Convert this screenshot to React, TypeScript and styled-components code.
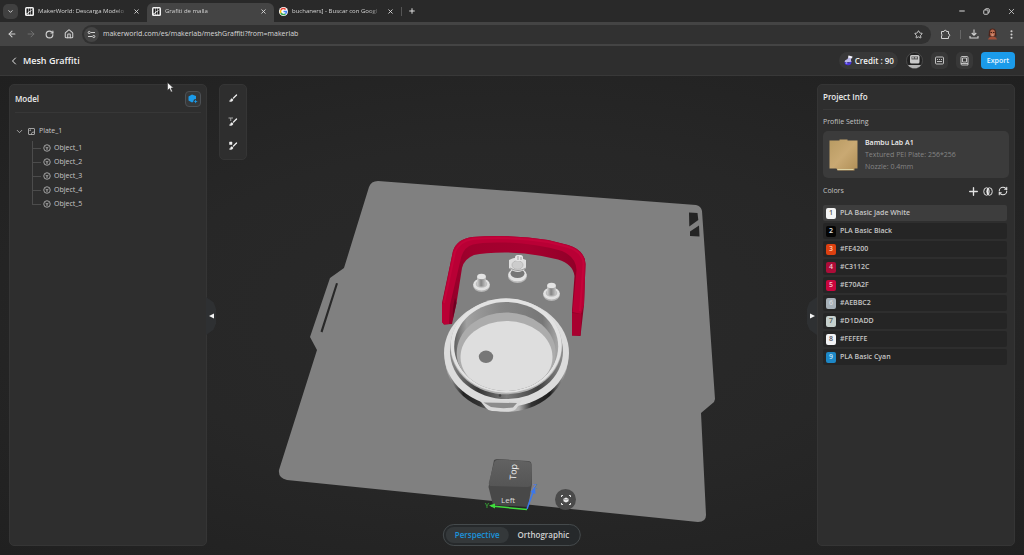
import React from "react";
import styled, { createGlobalStyle, css } from "styled-components";
import {
  ArrowLeft,
  ArrowRight,
  RotateCw,
  House,
  Star,
  EllipsisVertical,
  ChevronDown,
  ChevronLeft,
  X,
  Plus,
  Minus,
  RefreshCw,
} from "lucide-react";

const GlobalStyle = createGlobalStyle`
  * { box-sizing: border-box; }
  body {
    margin: 0;
    background: #222222;
    color: #e6e6e6;
    font-family: "Open Sans", "Noto Sans", sans-serif;
    font-size: 7px;
    line-height: 10px;
  }
  button, input { font: inherit; color: inherit; }
  button { padding: 0; border: 0; background: none; cursor: pointer; }
  ul { list-style: none; margin: 0; padding: 0; }
  h1, h2, h3, p { margin: 0; }
  svg { display: block; flex: none; }
`;

const Page = styled.div`
  display: flex;
  flex-direction: column;
  min-height: 100vh;
`;

/* Browser frame */

const TabStrip = styled.div`
  display: flex;
  align-items: center;
  height: 22px;
  padding-left: 3px;
  background: #292929;
  color: #dcdcdc;
`;

const TabSearch = styled.button`
  display: grid;
  place-items: center;
  width: 15px;
  height: 15px;
  margin-right: 2px;
  border-radius: 5px;
  background: #404040;
`;

const Tab = styled.div<{ $active?: boolean }>`
  display: flex;
  align-items: center;
  gap: 4px;
  width: 127px;
  height: 19px;
  margin-top: 3px;
  padding: 0 7px 3px 5px;
  border-radius: 6px 6px 0 0;
  background: ${(p) => (p.$active ? "#444444" : "transparent")};
`;

const TabTitle = styled.span`
  flex: 1;
  white-space: nowrap;
  font-size: 6px;
  color: #d4d4d4;
  mask-image: linear-gradient(to right, #000 85%, transparent);
`;

const TabDivider = styled.span`
  width: 1px;
  height: 9px;
  background: #555555;
`;

const PlainButton = styled.button`
  display: grid;
  place-items: center;
  width: 19px;
  height: 19px;
`;

const TabClose = styled.button`
  display: grid;
  place-items: center;
  width: 8px;
  height: 10px;
`;

const WindowControls = styled.div`
  display: flex;
  gap: 6px;
  margin-left: auto;
  padding-right: 3px;
`;

const Toolbar = styled.div`
  display: flex;
  align-items: center;
  height: 24px;
  padding: 0 3px 0 2px;
  background: #444444;
  color: #d2d2d2;
`;

const AddressBar = styled.div`
  display: flex;
  flex: 1;
  align-items: center;
  height: 19px;
  margin: 0 5px 0 4px;
  padding: 0 3px 0 2px;
  border-radius: 10px;
  background: #313131;
`;

const SiteInfo = styled.button`
  display: grid;
  place-items: center;
  width: 15px;
  height: 15px;
  margin-right: 4px;
  border-radius: 8px;
  background: #444444;
`;

const AddressInput = styled.input`
  flex: 1;
  min-width: 0;
  padding: 0;
  border: 0;
  outline: 0;
  background: none;
  color: #dadada;
`;

const ToolbarDivider = styled.span`
  width: 1px;
  height: 9px;
  margin: 0 3px 0 5px;
  background: #666666;
`;

/* Application header */

const Header = styled.header`
  display: flex;
  align-items: center;
  height: 30px;
  padding: 0 9px 0 8px;
  border-bottom: 1px solid #383838;
  background: #2e2e2e;
`;

const BackButton = styled.button`
  display: grid;
  place-items: center;
  width: 10px;
  height: 16px;
  margin-right: 5px;
`;

const Title = styled.h1`
  font-size: 9px;
  font-weight: 600;
  line-height: 12px;
  color: #f2f2f2;
`;

const HeaderActions = styled.div`
  display: flex;
  align-items: center;
  gap: 8px;
  margin-left: auto;
`;

const Credit = styled.div`
  display: flex;
  align-items: center;
  gap: 2px;
  height: 17px;
  padding: 0 4px 0 5px;
  border-radius: 9px;
  background: #383838;
  color: #f4f4f4;
  font-size: 8px;
  font-weight: 600;
`;

const HeaderButton = styled.button<{ $round?: boolean }>`
  display: grid;
  place-items: center;
  width: 17px;
  height: 17px;
  border-radius: ${(p) => (p.$round ? "9px" : "5px")};
  background: #383838;
  color: #d0d0d0;
`;

const ExportButton = styled.button`
  height: 17px;
  padding: 0 6px;
  border-radius: 4px;
  background: #1b9bea;
  color: #eaf6ff;
  font-weight: 600;
`;

/* Workspace */

const Workspace = styled.main`
  position: relative;
  display: flex;
  flex: 1;
  gap: 12px;
  padding: 8px 9px 9px;
  background: radial-gradient(ellipse at center, #2a2a2a 0%, #272727 50%, #202020 100%);
`;

const Scene = styled.svg`
  position: absolute;
  inset: 0;
  width: 100%;
  height: 100%;
`;

const Panel = styled.section`
  position: relative;
  width: 198px;
  border: 1px solid #353535;
  border-radius: 5px;
  background: #2e2e2e;
`;

const ProjectPanel = styled(Panel)`
  margin-left: auto;
`;

const PanelHeader = styled.div<{ $tall?: boolean }>`
  display: flex;
  align-items: center;
  justify-content: space-between;
  height: ${(p) => (p.$tall ? "28px" : "25px")};
  margin: 0 5px;
  border-bottom: 1px solid #373737;
`;

const PanelTitle = styled.h2`
  font-size: 8px;
  font-weight: 600;
  line-height: 12px;
  color: #ececec;
`;

const CubeToggle = styled.button`
  display: grid;
  place-items: center;
  width: 16px;
  height: 16px;
  border: 1px solid #4c5054;
  border-radius: 4px;
  background: #363839;
`;

const CollapseHandle = styled.button<{ $side: "left" | "right" }>`
  position: absolute;
  top: 212px;
  display: grid;
  place-items: center;
  width: 10px;
  height: 38px;
  background: #2e3032;
  ${(p) =>
    p.$side === "right"
      ? css`
          right: -10px;
          clip-path: polygon(0 0, 75% 14%, 100% 30%, 100% 70%, 75% 86%, 0 100%);
        `
      : css`
          left: -11px;
          clip-path: polygon(100% 0, 25% 14%, 0 30%, 0 70%, 25% 86%, 100% 100%);
        `}
`;

const Tree = styled.ul`
  padding: 10px 5px;
  color: #c8c8c8;
`;

const TreeParent = styled.button`
  display: flex;
  align-items: center;
  gap: 4px;
  height: 16px;
`;

const Branch = styled.ul`
  margin: 2px 0 0 17px;
`;

const Leaf = styled.li`
  position: relative;
  display: flex;
  height: 14px;
  padding-left: 11px;
  &::before {
    content: "";
    position: absolute;
    top: 0;
    left: 0;
    width: 8px;
    height: 7px;
    border-left: 1px solid #4c4c4c;
    border-bottom: 1px solid #4c4c4c;
  }
  &:not(:last-child)::after {
    content: "";
    position: absolute;
    top: 7px;
    bottom: 0;
    left: 0;
    border-left: 1px solid #4c4c4c;
  }
`;

const LeafButton = styled.button`
  display: flex;
  align-items: center;
  gap: 3px;
`;

const ToolPanel = styled.div`
  position: relative;
  display: flex;
  flex-direction: column;
  align-items: center;
  align-self: flex-start;
  gap: 8px;
  width: 28px;
  padding: 5px 0 5px;
  border: 1px solid #353535;
  border-radius: 5px;
  background: #2e2e2e;
`;

const ToolButton = styled.button`
  display: grid;
  place-items: center;
  width: 16px;
  height: 16px;
`;

const ViewSwitch = styled.div`
  position: absolute;
  bottom: 9px;
  left: 50%;
  display: flex;
  height: 22px;
  padding: 2px;
  border: 1px solid #454a4c;
  border-radius: 11px;
  background: #26292b;
  transform: translateX(-50%);
`;

const ViewOption = styled.button<{ $active?: boolean }>`
  padding: 0 9px;
  border-radius: 8px;
  background: ${(p) => (p.$active ? "#34383a" : "transparent")};
  color: ${(p) => (p.$active ? "#1b93dc" : "#d2d2d2")};
  font-size: 8px;
  font-weight: 600;
`;

const FocusButton = styled.button`
  position: absolute;
  bottom: 45px;
  left: calc(50% + 43px);
  display: grid;
  place-items: center;
  width: 21px;
  height: 21px;
  border-radius: 11px;
  background: #4a4a4a;
`;

const PanelBody = styled.div`
  padding: 7px 5px;
`;

const SectionLabel = styled.h3`
  font-size: 7px;
  font-weight: 400;
  color: #c4c4c4;
`;

const ProfileCard = styled.div`
  display: flex;
  align-items: center;
  gap: 6px;
  height: 47px;
  margin-top: 4px;
  padding-left: 5px;
  border-radius: 5px;
  background: #3b3b3b;
`;

const ProfileName = styled.p`
  font-weight: 600;
  line-height: 12px;
  color: #f0f0f0;
`;

const ProfileDetail = styled.p`
  line-height: 12px;
  color: #858585;
`;

const ColorsHeader = styled.div`
  display: flex;
  align-items: center;
  justify-content: space-between;
  margin-top: 5px;
  height: 16px;
`;

const ColorActions = styled.div`
  display: flex;
  gap: 3px;
`;

const SmallButton = styled.button`
  display: grid;
  place-items: center;
  width: 12px;
  height: 12px;
  color: #e4e4e4;
`;

const ColorList = styled.ul`
  display: flex;
  flex-direction: column;
  gap: 2px;
  margin: 6px 2px 0 0;
`;

const ColorRow = styled.button<{ $selected?: boolean }>`
  display: flex;
  align-items: center;
  gap: 4px;
  width: 100%;
  height: 16px;
  padding-left: 3px;
  border-radius: 2px;
  background: ${(p) => (p.$selected ? "#3d3d3d" : "#252525")};
  color: #c6c6c6;
  font-weight: 600;
`;

const Swatch = styled.span<{ $color: string; $ink: string }>`
  display: grid;
  place-items: center;
  width: 10px;
  height: 11px;
  border-radius: 2px;
  background: ${(p) => p.$color};
  color: ${(p) => p.$ink};
`;

const Pointer = styled.svg`
  position: absolute;
  top: 6px;
  left: 167px;
`;

const objects = ["Object_1", "Object_2", "Object_3", "Object_4", "Object_5"];

const colors = [
  { name: "PLA Basic Jade White", color: "#f4f4f4", ink: "#555555" },
  { name: "PLA Basic Black", color: "#050505", ink: "#e8e8e8" },
  { name: "#FE4200", color: "#dd4010", ink: "#ffc4a8" },
  { name: "#C3112C", color: "#ad0c38", ink: "#f3c4d0" },
  { name: "#E70A2F", color: "#c9053d", ink: "#f8c4d2" },
  { name: "#AEBBC2", color: "#a7b0b7", ink: "#d5dade" },
  { name: "#D1DADD", color: "#c6d0cd", ink: "#505856" },
  { name: "#FEFEFE", color: "#f2f2f4", ink: "#50505c" },
  { name: "PLA Basic Cyan", color: "#1d87c6", ink: "#bfe4fa" },
];

const MakerFavicon = () => (
  <svg width="9" height="9" viewBox="0 0 18 18" aria-hidden="true">
    <rect width="18" height="18" rx="3" fill="#f2f2f2" />
    <path d="M3 3h3v8l-3 2zM7 3h4v4l-4 3zM12 3h3v2l-3 2zM3 15l4-3v3zM8 11l3-2v6H8zM12 8l3-2v9h-3z" fill="#1d1d1d" />
  </svg>
);

const GoogleFavicon = () => (
  <svg width="9" height="9" viewBox="0 0 18 18" aria-hidden="true">
    <circle cx="9" cy="9" r="9" fill="#fff" />
    <g fill="none" strokeWidth="3">
      <path d="M13.2 5A6 6 0 0 0 3.8 6" stroke="#ea4335" />
      <path d="M3.8 6a6 6 0 0 0 0 6" stroke="#fbbc05" />
      <path d="M3.8 12a6 6 0 0 0 9 1.6" stroke="#34a853" />
      <path d="M12.8 13.6A6 6 0 0 0 15 9H9" stroke="#4285f4" />
    </g>
  </svg>
);

const TuneIcon = () => (
  <svg width="9" height="9" viewBox="0 0 18 18" fill="none" stroke="currentColor" strokeWidth="2">
    <path d="M8 5h8M2 13h8" />
    <circle cx="4.500" cy="5" r="2.200" />
    <circle cx="13.500" cy="13" r="2.200" />
  </svg>
);

const PuzzleIcon = () => (
  <svg width="11" height="11" viewBox="0 0 22 22" fill="none" stroke="currentColor" strokeWidth="2" strokeLinejoin="round">
    <path d="M3 5h5a2.500 2.500 0 0 1 5 0h4v5a2.500 2.500 0 0 1 0 5v4H3v-5a2.500 2.500 0 0 0 0-4z" />
  </svg>
);

const DownloadIcon = () => (
  <svg width="10" height="10" viewBox="0 0 20 20" fill="none" stroke="currentColor" strokeWidth="2.200">
    <path d="M10 1v11M5.500 8l4.500 4.500L14.500 8M2 14v4h16v-4" />
  </svg>
);

const RestoreIcon = () => (
  <svg width="7" height="7" viewBox="0 0 14 14" fill="none" stroke="currentColor" strokeWidth="1.8">
    <rect x="1.5" y="4" width="8.5" height="8.5" rx="1.5" />
    <path d="M4.5 4V3a1.500 1.500 0 0 1 1.500-1.500H11A1.500 1.500 0 0 1 12.500 3v5A1.500 1.500 0 0 1 11 9.500h-1" />
  </svg>
);

const Avatar = () => (
  <svg width="11" height="12" viewBox="0 0 22 24">
    <path d="M4 7q1-6 7-6t7 6l1 10H3z" fill="#4c241b" />
    <ellipse cx="11" cy="10" rx="5" ry="7" fill="#b9694d" />
    <path d="M2 23q2-6 9-6t9 6z" fill="#a34f38" />
    <path d="M7 9h3M12 9h3" stroke="#3d1c14" strokeWidth="2" />
    <path d="M9 14h4" stroke="#f0d2c2" strokeWidth="1.500" />
  </svg>
);

const FlaskIcon = () => (
  <svg width="9" height="12" viewBox="0 0 18 24">
    <path d="M9 4l5 1v6a7 7 0 0 1 1 3H1q0-4 6-6z" fill="#b9b6e6" />
    <path d="M1 14q7 3 14-1a7 7 0 1 1-14 1z" fill="#4b35dc" />
    <path d="M9 1l8 2-1 4-8-2z" fill="#f5f5ff" />
    <circle cx="5" cy="16" r="2" fill="#8e86ff" />
  </svg>
);

const RobotIcon = () => (
  <svg width="17" height="17" viewBox="0 0 34 34">
    <circle cx="17" cy="17" r="16" fill="#222" stroke="#525252" strokeWidth="1.500" />
    <path d="M4 26h26a16 16 0 0 1-26 0z" fill="#b4b4b4" />
    <rect x="8" y="6" width="19" height="17" rx="3" fill="#c9c9c9" />
    <path d="M11 9h13v6H11z" fill="#5a5a5a" />
    <path d="M14 10v3M20 10v3" stroke="#eee" strokeWidth="2" />
  </svg>
);

const KeyboardIcon = () => (
  <svg width="9" height="9" viewBox="0 0 18 18" fill="none" stroke="currentColor" strokeWidth="1.800">
    <rect x="1" y="2" width="16" height="14" rx="2" />
    <path d="M4 7h2M8 7h2M12 7h2M4 11h10" />
  </svg>
);

const ManualIcon = () => (
  <svg width="9" height="10" viewBox="0 0 18 20" fill="none" stroke="currentColor" strokeWidth="1.800">
    <path d="M4 1h10a2 2 0 0 1 2 2v15H4a2 2 0 0 1-2-2V3a2 2 0 0 1 2-2z" />
    <path d="M5 4h8v8H5zM2 15h14" />
  </svg>
);

const ModelCubeIcon = () => (
  <svg width="10" height="10" viewBox="0 0 20 20">
    <path d="M8 1l8 3v6l-4 1-2 5-2 1-7-4V5z" fill="#1b9bea" />
    <path d="M15 11l1.500 3 3 1-3 1-1.500 3-1-3-3-1 3-1z" fill="#1b9bea" />
  </svg>
);

const PlateIcon = () => (
  <svg width="7" height="7" viewBox="0 0 14 14" fill="none" stroke="currentColor" strokeWidth="1.500">
    <rect x="1" y="1" width="12" height="12" rx="1" />
    <path d="M4 6V4h2M7 13v-2q0-3 6-3" />
  </svg>
);

const ObjectIcon = () => (
  <svg width="8" height="8" viewBox="0 0 16 16" fill="none" stroke="currentColor" strokeWidth="1.500">
    <circle cx="8" cy="8" r="6.500" />
    <path d="M8 8V12M8 8L5 6M8 8l3-2" />
  </svg>
);

const Brush = ({ kind }: { kind: "plain" | "text" | "dots" }) => (
  <svg width="10" height="10" viewBox="0 0 20 20" fill="none" stroke="#efefef">
    <path d="M17 4l-6 6" strokeWidth="2.600" strokeLinecap="round" />
    <path d="M8 11q-3 0-3 3 0 2-3 2 5 3 8-1 1-2-2-4z" fill="#efefef" strokeWidth="0.500" />
    {kind === "text" && <path d="M1 2h9M5.500 2v6" stroke="#a4a4a4" strokeWidth="2" />}
    {kind === "dots" && <path d="M3 2h5v5H3z" fill="#efefef" />}
  </svg>
);

const ContrastIcon = () => (
  <svg width="10" height="9" viewBox="0 0 20 18">
    <ellipse cx="7" cy="9" rx="5.500" ry="7.500" fill="none" stroke="#ddd" strokeWidth="2" />
    <ellipse cx="13" cy="9" rx="5.500" ry="7.500" fill="none" stroke="#ddd" strokeWidth="2" />
    <path d="M10 3v12q-3-6 0-12z" fill="#eee" stroke="#eee" strokeWidth="2" />
  </svg>
);

const PlateThumb = () => (
  <svg width="31" height="32" viewBox="0 0 30 32" role="img" aria-label="Textured plate">
    <defs>
      <linearGradient id="gold" x1="0" y1="0" x2="1" y2="1">
        <stop offset="0" stopColor="#b89a62" />
        <stop offset="0.500" stopColor="#c9a973" />
        <stop offset="1" stopColor="#b08f57" />
      </linearGradient>
    </defs>
    <path d="M1 1.500h10v-1h8v1h10v28h-3v2H9l-1-2H1z" fill="url(#gold)" />
    <path d="M9 30.500h16" stroke="#dcd2a4" />
  </svg>
);

const FocusIcon = () => (
  <svg width="12" height="12" viewBox="0 0 24 24" fill="none" stroke="#e8e8e8" strokeWidth="2">
    <path d="M3 6V3h3M18 3h3v3M21 18v3h-3M6 21H3v-3" />
    <path d="M12 7l5 2.500v5L12 17l-5-2.500v-5z" fill="#eee" stroke="none" />
    <path d="M8 10l4 2 4-2" stroke="#555" strokeWidth="1" />
  </svg>
);

const Arrow = ({ flip }: { flip?: boolean }) => (
  <svg width="5" height="6" viewBox="0 0 5 6">
    <path d={flip ? "M0 0.500L5 3 0 5.500z" : "M5 0.500L0 3l5 2.500z"} fill="#f4f4f4" />
  </svg>
);

const Peg = ({ x, y }: { x: number; y: number }) => (
  <g transform={`translate(${x} ${y})`}>
    <ellipse cx="0" cy="3" rx="8.300" ry="6" fill="#b5b5b5" />
    <ellipse cx="0" cy="1.500" rx="8.300" ry="6" fill="#e2e2e2" />
    <ellipse cx="0" cy="1" rx="5.800" ry="3.800" fill="#bdbdbd" />
    <path d="M-4.300-6.500V1a4.300 2.600 0 0 0 8.600 0V-6.500z" fill="url(#pin)" />
    <ellipse cx="0" cy="-6.500" rx="4.300" ry="2.800" fill="#e4e4e4" />
  </g>
);

const ModelScene = () => (
  <Scene viewBox="0 76 1024 479" role="img" aria-label="Model on build plate">
    <defs>
      <linearGradient id="pin">
        <stop offset="0" stopColor="#d0d0d0" />
        <stop offset="0.450" stopColor="#858585" />
        <stop offset="1" stopColor="#c4c4c4" />
      </linearGradient>
      <linearGradient id="wall">
        <stop offset="0" stopColor="#606060" />
        <stop offset="0.120" stopColor="#a0a0a0" />
        <stop offset="0.450" stopColor="#858585" />
        <stop offset="0.850" stopColor="#777777" />
        <stop offset="1" stopColor="#a8a8a8" />
      </linearGradient>
      <linearGradient id="skirt">
        <stop offset="0" stopColor="#c0c0c0" />
        <stop offset="0.150" stopColor="#222222" />
        <stop offset="0.280" stopColor="#333333" />
        <stop offset="0.450" stopColor="#c0c0c0" />
        <stop offset="0.600" stopColor="#b0b0b0" />
        <stop offset="0.700" stopColor="#333333" />
        <stop offset="0.850" stopColor="#1c1c1c" />
        <stop offset="1" stopColor="#bbbbbb" />
      </linearGradient>
      <linearGradient id="gap" x1="0" y1="0" x2="1" y2="0">
        <stop offset="0" stopColor="#8c8c8c" />
        <stop offset="0.250" stopColor="#363636" />
        <stop offset="0.500" stopColor="#7c7c7c" />
        <stop offset="0.780" stopColor="#404040" />
        <stop offset="1" stopColor="#8c8c8c" />
      </linearGradient>
      <linearGradient id="redInside">
        <stop offset="0" stopColor="#8f0029" />
        <stop offset="0.200" stopColor="#a0002d" />
        <stop offset="0.600" stopColor="#a6002f" />
        <stop offset="1" stopColor="#8c0027" />
      </linearGradient>
      <linearGradient id="cubeTop" x1="0" y1="0" x2="0" y2="1">
        <stop offset="0" stopColor="#626262" />
        <stop offset="1" stopColor="#555555" />
      </linearGradient>
    </defs>

    <path
      fillRule="evenodd"
      fill="#808080"
      d="M378 181L696 205Q701 206 702 211L715 399 714 402 701 413 706 515Q706 522 698 522L287 480Q278 478 279 470L317 350 310 337 330 278 344 268 369 187Q371 181 378 181zM336 283l2 0.500L322.500 332.500 320.500 331.500z"
    />
    <path d="M689 212.500l8.500 0.500 0.800 7-9 6.500zM699 225.500l0.500 11-9.500-0.500 0-4.500z" fill="#242424" />

    <path
      d="M442 322V303L453 251Q457 239 472 237 512 234 548 240L568 245Q585 250 585.500 264L584 305 580.500 336 572 335.500 572 310 574.500 276Q573 264 558 259.500 530 252.500 505 252.500 484 252.500 474 255 464 259 462 268L456.500 303 452 324 444 324.500z"
      fill="url(#redInside)"
    />
    <path
      d="M442 305L453 251Q457 239 472 237 512 234 548 240L568 245Q585 250 585.500 264L584 305 581 314 572.500 312 576.500 270Q576 257 562 251 535 243.500 505 242.500 482 242 473 244.500 464 247 461 258L450 305 449 324 444 324.500 442 322z"
      fill="#b90035"
    />
    <path d="M444 303L455 252Q459 241 473 239 512 236 548 242L568 247Q583 252 583.500 264L580 311" fill="none" stroke="#c4033a" strokeWidth="2" />
    <path d="M455 298Q452 310 453 318L456.500 303z" fill="#6f0021" />
    <path d="M572 313L572 335.500H580.500L581.500 314z" fill="#a8002f" />

    <Peg x={481.500} y={283} />
    <Peg x={551.500} y={292} />
    <g>
      <ellipse cx="517.500" cy="276.500" rx="9.300" ry="6.500" fill="#bababa" />
      <ellipse cx="517.500" cy="274.800" rx="9.300" ry="6.500" fill="#e3e3e3" />
      <ellipse cx="517.500" cy="273.500" rx="7" ry="4.500" fill="#777777" />
      <path d="M509 260q8-5 17 0v8q-8 8-17 0z" fill="#dedede" />
      <path d="M510 268q8 5 16 0" fill="none" stroke="#9c9c9c" />
      <ellipse cx="517.500" cy="265" rx="5.500" ry="4.300" fill="#cccccc" stroke="#bababa" />
      <rect x="515" y="255" width="8" height="6" rx="2.500" fill="#e6e6e6" />
      <path d="M518 256v4M521 257v3" stroke="#a3a3a3" />
    </g>

    <ellipse cx="506.500" cy="357.500" rx="61.500" ry="54.500" fill="url(#skirt)" />
    <ellipse cx="506.500" cy="353" rx="62.500" ry="53.500" fill="#dcdcdc" />
    <ellipse cx="506.500" cy="351.500" rx="56.500" ry="47.500" fill="url(#gap)" />
    <path d="M479 399.500L484 400 518 400.500 522 400 516 409Q514 411 508 411.500L492 411Q488 410.500 486 408z" fill="#d8d8d8" />
    <path d="M483.500 402.500L517 403 513 407.500Q502 409 491 407z" fill="#8c8c8c" />
    <ellipse cx="506.200" cy="346.500" rx="55.800" ry="47.800" fill="#b4b4b4" />
    <ellipse cx="506.200" cy="345.500" rx="55.500" ry="47.200" fill="#e2e2e2" />
    <ellipse cx="506.200" cy="346.500" rx="52" ry="44.500" fill="url(#wall)" />
    <clipPath id="cavity">
      <ellipse cx="506.200" cy="346.500" rx="52" ry="44.500" />
    </clipPath>
    <g clipPath="url(#cavity)">
      <ellipse cx="506.200" cy="353" rx="49.500" ry="40.500" fill="#acacac" />
      <ellipse cx="506.500" cy="357" rx="46" ry="36" fill="#dedede" />
    </g>
    <ellipse cx="486" cy="356.800" rx="7.200" ry="6.200" fill="#777777" />
    <circle cx="500" cy="395.500" r="1.300" fill="#444444" />

    <path d="M494 460Q496 459 498 459L528 461Q531 461 531.500 464L532 484 528 507 493 505 488.500 487z" fill="#484848" />
    <path d="M494 463Q495 459.500 499 459.500L528 461.500Q531.500 462 531.500 466V484Q531 487 527 487L492 486Q488 486 489 482z" fill="url(#cubeTop)" />
    <text transform="translate(516 480) rotate(-86)" fontSize="9" fill="#f1f1f1" fontFamily="Open Sans, sans-serif">Top</text>
    <text x="501" y="503" fontSize="8" fill="#d9d9d9" fontFamily="Open Sans, sans-serif">Left</text>
    <path d="M527 509.500L491 506" stroke="#40dc3d" strokeWidth="1.500" />
    <path d="M489 505.500l6-2v5z" fill="#40dc3d" />
    <path d="M527 509L533 492" stroke="#3b78ec" strokeWidth="1.500" />
    <path d="M535 487l0.500 7-5-2z" fill="#3b78ec" />
    <text x="485" y="508" fontSize="7" fill="#40dc3d" fontFamily="Open Sans, sans-serif">Y</text>
    <text x="533" y="489" fontSize="7" fill="#3b78ec" fontFamily="Open Sans, sans-serif">Z</text>
  </Scene>
);

const BrowserTab = ({ title, active, icon }: { title: string; active?: boolean; icon: React.ReactNode }) => (
  <Tab $active={active}>
    {icon}
    <TabTitle>{title}</TabTitle>
    <TabClose aria-label={`Close ${title}`}>
      <X size={7} strokeWidth={3} />
    </TabClose>
  </Tab>
);

export default function App() {
  return (
    <Page>
      <GlobalStyle />
      <TabStrip>
        <TabSearch aria-label="Search tabs">
          <ChevronDown size={7} strokeWidth={3} />
        </TabSearch>
        <BrowserTab title="MakerWorld: Descarga Modelo" icon={<MakerFavicon />} />
        <BrowserTab title="Grafiti de malla" active icon={<MakerFavicon />} />
        <BrowserTab title="buchaners] - Buscar con Googl" icon={<GoogleFavicon />} />
        <TabDivider />
        <PlainButton aria-label="New tab">
          <Plus size={8} strokeWidth={3} />
        </PlainButton>
        <WindowControls>
          <PlainButton aria-label="Minimize"><Minus size={8} strokeWidth={3} /></PlainButton>
          <PlainButton aria-label="Restore"><RestoreIcon /></PlainButton>
          <PlainButton aria-label="Close window"><X size={9} /></PlainButton>
        </WindowControls>
      </TabStrip>

      <Toolbar>
        <PlainButton aria-label="Back"><ArrowLeft size={10} strokeWidth={2.5} /></PlainButton>
        <PlainButton aria-label="Forward"><ArrowRight size={10} color="#777777" /></PlainButton>
        <PlainButton aria-label="Reload"><RotateCw size={9} strokeWidth={3} /></PlainButton>
        <PlainButton aria-label="Home"><House size={10} strokeWidth={2.5} /></PlainButton>
        <AddressBar>
          <SiteInfo aria-label="Site information"><TuneIcon /></SiteInfo>
          <AddressInput aria-label="Address" defaultValue="makerworld.com/es/makerlab/meshGraffiti?from=makerlab" />
          <PlainButton aria-label="Bookmark"><Star size={9} strokeWidth={2.5} /></PlainButton>
        </AddressBar>
        <PlainButton aria-label="Extensions"><PuzzleIcon /></PlainButton>
        <ToolbarDivider />
        <PlainButton aria-label="Downloads"><DownloadIcon /></PlainButton>
        <PlainButton aria-label="Profile"><Avatar /></PlainButton>
        <PlainButton aria-label="Menu"><EllipsisVertical size={11} strokeWidth={2.5} /></PlainButton>
      </Toolbar>

      <Header>
        <BackButton aria-label="Go back"><ChevronLeft size={12} strokeWidth={2} /></BackButton>
        <Title>Mesh Graffiti</Title>
        <HeaderActions>
          <Credit><FlaskIcon />Credit : 90</Credit>
          <HeaderButton $round aria-label="Assistant"><RobotIcon /></HeaderButton>
          <HeaderButton aria-label="Shortcuts"><KeyboardIcon /></HeaderButton>
          <HeaderButton aria-label="Manual"><ManualIcon /></HeaderButton>
          <ExportButton>Export</ExportButton>
        </HeaderActions>
      </Header>

      <Workspace>
        <ModelScene />
        <Panel>
          <PanelHeader $tall>
            <PanelTitle>Model</PanelTitle>
            <CubeToggle aria-label="Model view"><ModelCubeIcon /></CubeToggle>
          </PanelHeader>
          <Tree>
            <li>
              <TreeParent>
                <ChevronDown size={9} strokeWidth={2} />
                <PlateIcon />
                Plate_1
              </TreeParent>
              <Branch>
                {objects.map((name) => (
                  <Leaf key={name}>
                    <LeafButton><ObjectIcon />{name}</LeafButton>
                  </Leaf>
                ))}
              </Branch>
            </li>
          </Tree>
          <CollapseHandle $side="right" aria-label="Collapse model panel"><Arrow /></CollapseHandle>
        </Panel>

        <ToolPanel>
          <ToolButton aria-label="Brush"><Brush kind="plain" /></ToolButton>
          <ToolButton aria-label="Text brush"><Brush kind="text" /></ToolButton>
          <ToolButton aria-label="Pattern brush"><Brush kind="dots" /></ToolButton>
        </ToolPanel>

        <ProjectPanel>
          <PanelHeader>
            <PanelTitle>Project Info</PanelTitle>
          </PanelHeader>
          <PanelBody>
            <SectionLabel>Profile Setting</SectionLabel>
            <ProfileCard>
              <PlateThumb />
              <div>
                <ProfileName>Bambu Lab A1</ProfileName>
                <ProfileDetail>Textured PEI Plate: 256*256</ProfileDetail>
                <ProfileDetail>Nozzle: 0.4mm</ProfileDetail>
              </div>
            </ProfileCard>
            <ColorsHeader>
              <SectionLabel>Colors</SectionLabel>
              <ColorActions>
                <SmallButton aria-label="Add color"><Plus size={13} strokeWidth={2.5} /></SmallButton>
                <SmallButton aria-label="Merge colors"><ContrastIcon /></SmallButton>
                <SmallButton aria-label="Reset colors"><RefreshCw size={10} strokeWidth={2.5} /></SmallButton>
              </ColorActions>
            </ColorsHeader>
            <ColorList>
              {colors.map((c, i) => (
                <li key={c.name}>
                  <ColorRow $selected={i === 0}>
                    <Swatch $color={c.color} $ink={c.ink}>{i + 1}</Swatch>
                    {c.name}
                  </ColorRow>
                </li>
              ))}
            </ColorList>
          </PanelBody>
          <CollapseHandle $side="left" aria-label="Collapse project panel"><Arrow flip /></CollapseHandle>
        </ProjectPanel>

        <FocusButton aria-label="Focus model"><FocusIcon /></FocusButton>
        <ViewSwitch>
          <ViewOption $active>Perspective</ViewOption>
          <ViewOption>Orthographic</ViewOption>
        </ViewSwitch>
        <Pointer width="7" height="11" viewBox="0 0 14 22" aria-hidden="true">
          <path d="M1 1v16l4-4 3 7 3-1-3-7h5z" fill="#f4f4f4" stroke="#222222" />
        </Pointer>
      </Workspace>
    </Page>
  );
}
